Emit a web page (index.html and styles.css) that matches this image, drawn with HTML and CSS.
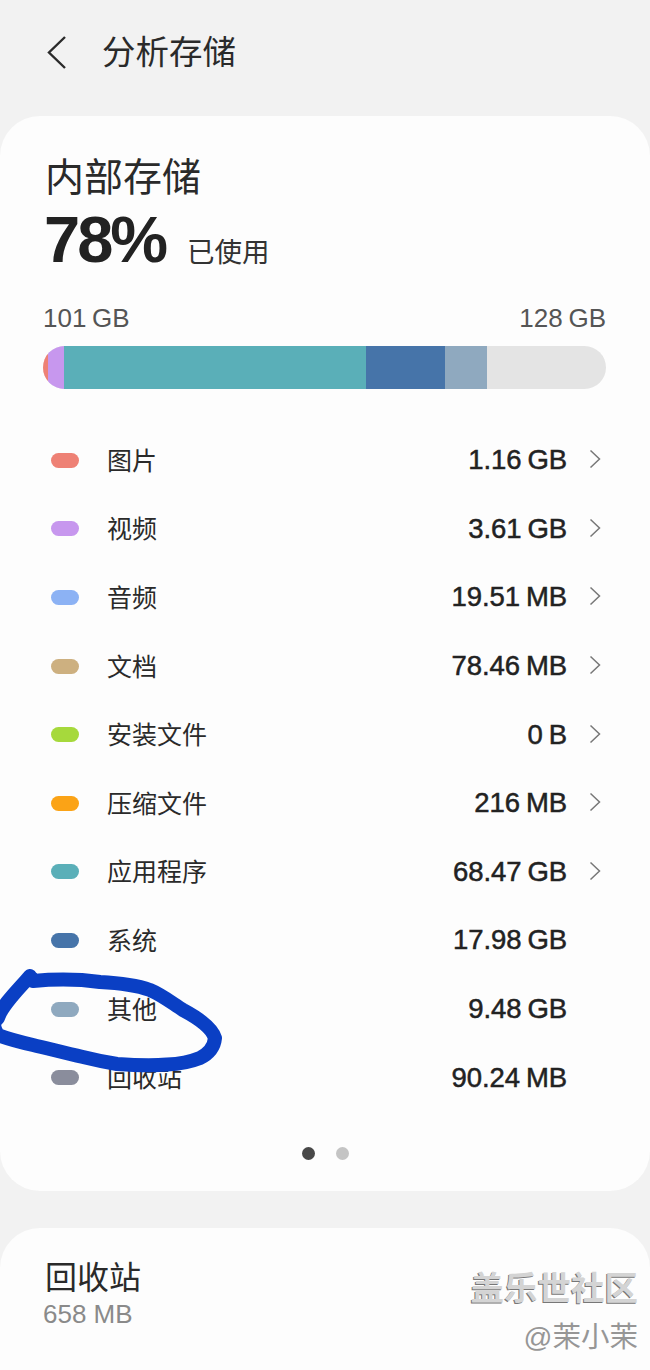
FILE: index.html
```html
<!DOCTYPE html>
<html lang="zh">
<head>
<meta charset="utf-8">
<title>分析存储</title>
<link rel="stylesheet" href="styles.css">
</head>
<body>
<div class="screen">
  <header class="top">
    <svg class="back" width="24" height="36" viewBox="0 0 24 36"><path d="M20 2 L4 17.5 L20 33" fill="none" stroke="#2a2a2a" stroke-width="2.4"/></svg>
    <h1 class="title">分析存储</h1>
  </header>
  <section class="card main">
    <h2 class="heading">内部存储</h2>
    <div class="usage"><span class="pct">78%</span><span class="used">已使用</span></div>
    <div class="scale"><span>101 GB</span><span>128 GB</span></div>
    <div class="bar">
      <i class="seg c-img s1"></i><i class="seg c-vid s2"></i><i class="seg c-app s3"></i><i class="seg c-sys s4"></i><i class="seg c-oth s5"></i>
    </div>
    <ul class="list">
      <li class="row"><i class="dot c-img"></i><span class="name">图片</span><span class="val">1.16 GB</span><svg class="chev" viewBox="0 0 12 20"><path d="M1.5 1.5 L10.5 10 L1.5 18.5"/></svg></li>
      <li class="row"><i class="dot c-vid"></i><span class="name">视频</span><span class="val">3.61 GB</span><svg class="chev" viewBox="0 0 12 20"><path d="M1.5 1.5 L10.5 10 L1.5 18.5"/></svg></li>
      <li class="row"><i class="dot c-aud"></i><span class="name">音频</span><span class="val">19.51 MB</span><svg class="chev" viewBox="0 0 12 20"><path d="M1.5 1.5 L10.5 10 L1.5 18.5"/></svg></li>
      <li class="row"><i class="dot c-doc"></i><span class="name">文档</span><span class="val">78.46 MB</span><svg class="chev" viewBox="0 0 12 20"><path d="M1.5 1.5 L10.5 10 L1.5 18.5"/></svg></li>
      <li class="row"><i class="dot c-apk"></i><span class="name">安装文件</span><span class="val">0 B</span><svg class="chev" viewBox="0 0 12 20"><path d="M1.5 1.5 L10.5 10 L1.5 18.5"/></svg></li>
      <li class="row"><i class="dot c-zip"></i><span class="name">压缩文件</span><span class="val">216 MB</span><svg class="chev" viewBox="0 0 12 20"><path d="M1.5 1.5 L10.5 10 L1.5 18.5"/></svg></li>
      <li class="row"><i class="dot c-app"></i><span class="name">应用程序</span><span class="val">68.47 GB</span><svg class="chev" viewBox="0 0 12 20"><path d="M1.5 1.5 L10.5 10 L1.5 18.5"/></svg></li>
      <li class="row"><i class="dot c-sys"></i><span class="name">系统</span><span class="val">17.98 GB</span><span class="nochev"></span></li>
      <li class="row"><i class="dot c-oth"></i><span class="name">其他</span><span class="val">9.48 GB</span><span class="nochev"></span></li>
      <li class="row"><i class="dot c-bin"></i><span class="name">回收站</span><span class="val">90.24 MB</span><span class="nochev"></span></li>
    </ul>
    <div class="pager"><i class="pg on"></i><i class="pg"></i></div>
  </section>
  <section class="card bin">
    <h2 class="bin-title">回收站</h2>
    <div class="bin-size">658 MB</div>
  </section>
  <svg class="scribble" width="230" height="100" viewBox="0 970 230 100"><path d="M30 976 L33 981 C55 979 78 979 100 982 C120 983 136 985 150 990 C162 995 172 1003 183 1010 C198 1018 212 1028 215 1038 C214 1048 208 1054 200 1058 C190 1062 180 1064 167 1064.5 C150 1066 132 1065 117 1064 C105 1062 95 1060 83 1057 C65 1053 50 1049 33 1045 C20 1042 8 1039 -2 1035 C-8 1025 -6 1022 -2 1018 C2 1005 18 990 30 976" fill="none" stroke="#0a3fc4" stroke-width="14" stroke-linecap="round" stroke-linejoin="round"/></svg>
  <div class="mark"><div class="mark-a">盖乐世社区</div><div class="mark-b">@茉小茉</div></div>
</div>
</body>
</html>
```
FILE: styles.css
```css
* { box-sizing: border-box; }
html, body { margin: 0; padding: 0; }
body { background: #f2f2f2; font-family: "Liberation Sans", "Noto Sans CJK SC", sans-serif; color: #222; }
.screen { position: relative; width: 650px; height: 1370px; overflow: hidden; }
.top { display: flex; align-items: center; height: 116px; padding: 0 0 11px 45px; }
.back { display: block; margin-right: 33px; }
.title { margin: 0; font-size: 33.5px; font-weight: 400; line-height: 40px; color: #2a2a2a; }
.card { background: #fdfdfd; border-radius: 40px; }
.main { height: 1075px; padding: 38px 44px 0 43px; }
.heading { margin: 0 0 0 2px; font-size: 39px; font-weight: 400; line-height: 48px; color: #2a2a2a; }
.usage { display: flex; align-items: baseline; margin: 6px 0 0 1px; height: 64px; }
.pct { font-size: 65px; font-weight: 700; line-height: 64px; color: #222; letter-spacing: -3px; }
.used { margin-left: 22px; font-size: 27.5px; color: #333; }
.scale { display: flex; justify-content: space-between; margin-top: 31px; font-size: 26px; line-height: 30px; color: #555; word-spacing: -1.5px; }
.bar { display: flex; height: 43px; margin-top: 13px; border-radius: 22px; overflow: hidden; background: #e4e4e4; }
.seg { display: block; height: 100%; }
.s1 { width: 5px; }
.s2 { width: 16px; }
.s3 { width: 302px; }
.s4 { width: 79px; }
.s5 { width: 42px; }
.c-img { background: #ee8175; }
.c-vid { background: #c797ee; }
.c-aud { background: #8cb2f4; }
.c-doc { background: #cdb080; }
.c-apk { background: #a6d93c; }
.c-zip { background: #fba316; }
.c-app { background: #5aafb8; }
.c-sys { background: #4674a9; }
.c-oth { background: #8fa9bf; }
.c-bin { background: #8a8d9c; }
.list { list-style: none; margin: 37px 0 0; padding: 0; }
.row { display: flex; align-items: center; height: 68.6px; }
.dot { display: block; flex: none; width: 28px; height: 15px; margin-left: 8px; border-radius: 8px; }
.name { margin: -3px 0 0 28px; font-size: 25px; color: #2a2a2a; }
.val { margin-left: auto; margin-right: 1px; font-size: 27.5px; color: #222; word-spacing: -1.5px; letter-spacing: -0.1px; -webkit-text-stroke: 0.5px #222; }
.chev { flex: none; width: 12px; height: 20px; margin: -2px 5px 0 21px; fill: none; stroke: #777; stroke-width: 1.5; }
.nochev { flex: none; width: 38px; }
.pager { display: flex; justify-content: center; gap: 21px; margin-top: 35px; padding-left: 1px; }
.pg { display: block; width: 13px; height: 13px; border-radius: 50%; background: #c4c4c4; }
.pg.on { background: #484848; }
.bin { height: 180px; margin-top: 37px; padding: 30px 45px; }
.bin-title { margin: 0; font-size: 32px; font-weight: 400; line-height: 40px; color: #2a2a2a; }
.bin-size { font-size: 26px; line-height: 34px; color: #8a8a8a; margin: -1px 0 0 -2px; }
.scribble { position: absolute; left: 0; top: 970px; overflow: visible; }
.mark { position: absolute; right: 12px; top: 1268px; text-align: right; }
.mark-a { font-size: 33.5px; line-height: 42px; font-weight: 700; color: #d4d4d4; text-shadow: -1px 1px 0 #777; }
.mark-b { margin-top: 9px; font-size: 28.5px; line-height: 36px; color: #969696; }
```
